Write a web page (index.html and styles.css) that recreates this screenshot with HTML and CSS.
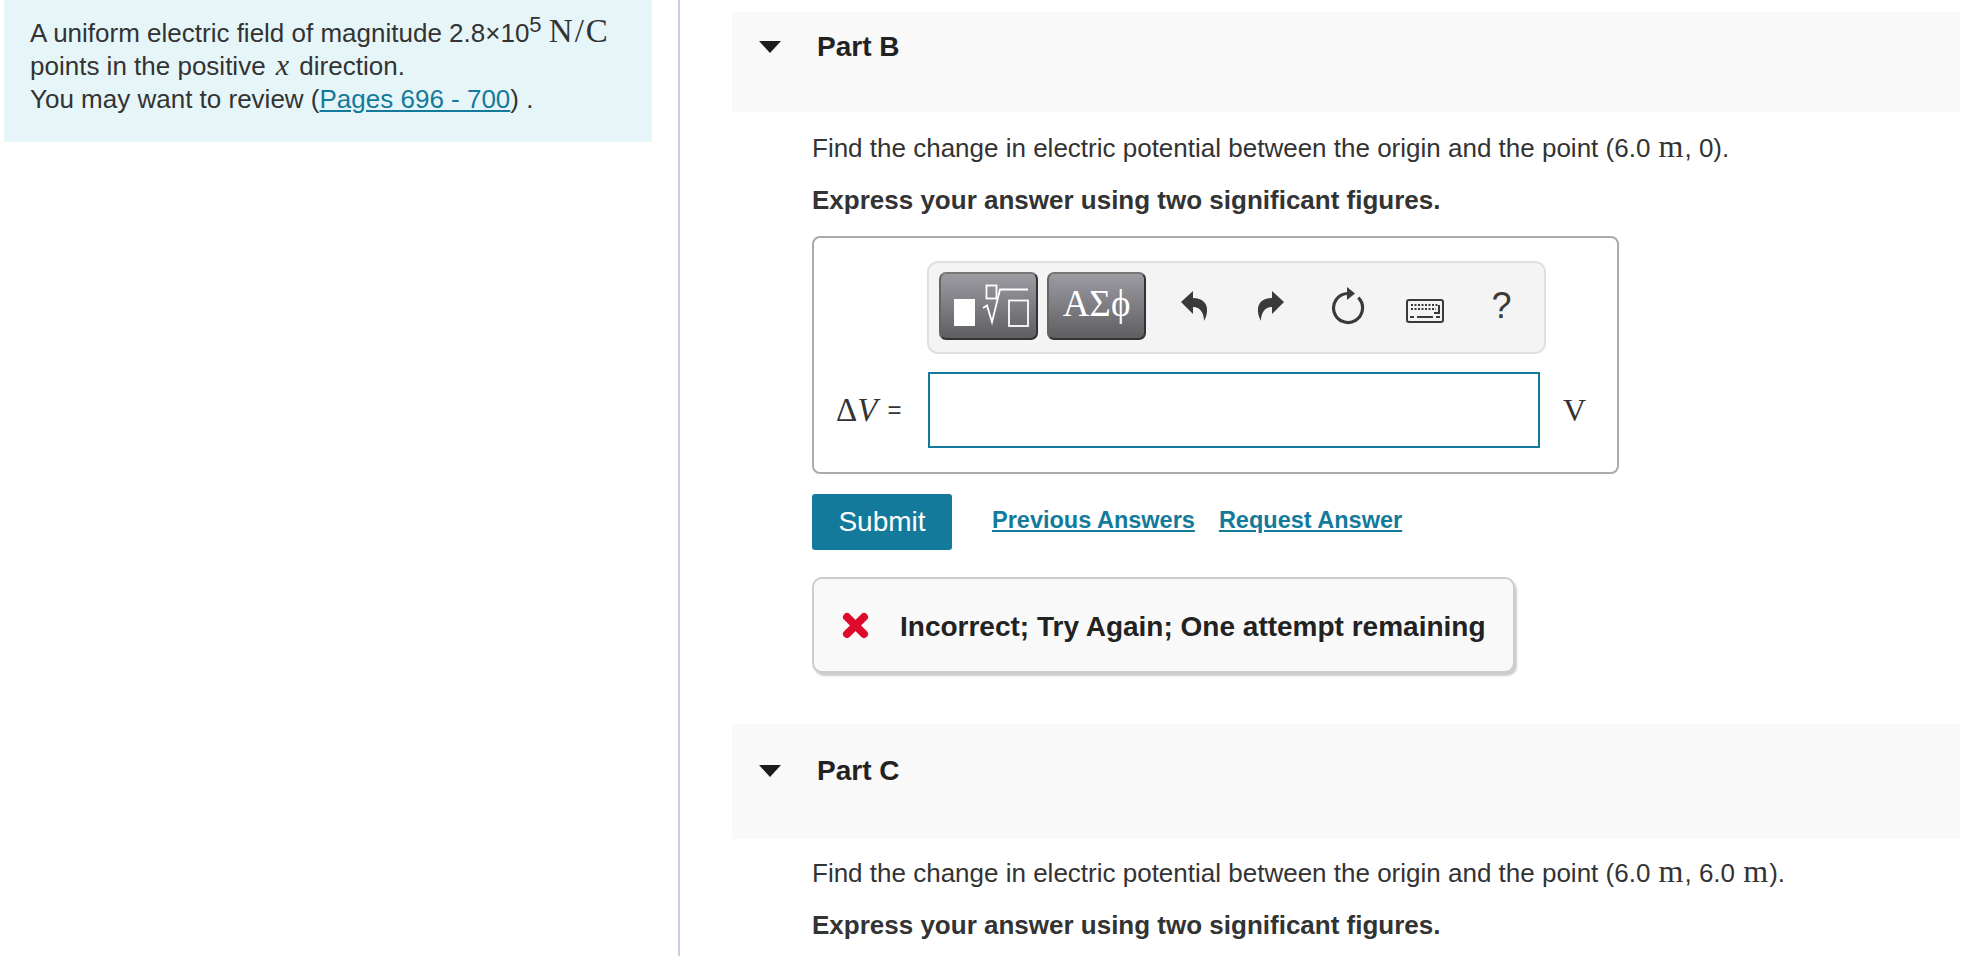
FILE: index.html
```html
<!DOCTYPE html>
<html lang="en">
<head>
    <meta charset="UTF-8">
    <meta name="viewport" content="width=device-width, initial-scale=1.0">
    <title>Electric Potential</title>
    <link rel="stylesheet" href="styles.css">
</head>
<body>
    <div class="page">
        <div class="left-col">
            <div class="intro">
                A uniform electric field of magnitude 2.8×10<sup class="power">5</sup> <span class="math math-unit">N<span class="slash">/</span>C</span><br>
                points in the positive <span class="math math-var">x</span> direction.<br>
                You may want to review (<a href="#">Pages 696 - 700</a>) .
            </div>
        </div>
        <div class="right-col">
            <div class="part-head">
                <span class="caret"></span>
                <span class="part-title">Part B</span>
            </div>
            <div class="part-body">
                <p class="question">Find the change in electric potential between the origin and the point (6.0 <span class="math math-metre">m</span>, 0).</p>
                <p class="hint">Express your answer using two significant figures.</p>

                <div class="answer-box">
                    <div class="toolbar">
                        <button class="tool-btn">
                            <svg class="tool-svg" width="95" height="64" viewBox="2 2 95 64">
                                <rect x="15" y="27" width="21" height="27" fill="#fff"/>
                                <rect x="47.500" y="13.500" width="10" height="13" fill="none" stroke="#fff" stroke-width="1.800"/>
                                <path d="M44 36 L48 33.500 L53 50 L61 17.500 H89" fill="none" stroke="#fff" stroke-width="1.800"/>
                                <rect x="70" y="28.500" width="19" height="25.500" fill="none" stroke="#fff" stroke-width="1.800"/>
                            </svg>
                        </button>
                        <button class="tool-btn tool-greek">ΑΣϕ</button>
                        <span class="tool-icon icon-undo">
                            <svg width="28" height="32" viewBox="0 0 28 32"><path d="M1 12 L13 1 V8 C22 8 28 13 27 22 C26.700 26 25 29 24 31 C24 24 21 17 13 17 V24 Z" fill="#3a3a3a"/></svg>
                        </span>
                        <span class="tool-icon icon-redo">
                            <svg width="28" height="32" viewBox="0 0 28 32"><path d="M27 12 L15 1 V8 C6 8 0 13 1 22 C1.300 26 3 29 4 31 C4 24 7 17 15 17 V24 Z" fill="#3a3a3a"/></svg>
                        </span>
                        <span class="tool-icon icon-reset">
                            <svg width="34" height="38" viewBox="0 0 34 38"><path d="M27.300 10.700 A14.500 14.500 0 1 1 16 6.500" fill="none" stroke="#3a3a3a" stroke-width="3.200"/><path d="M16 0 L24 6.500 L16 13 Z" fill="#3a3a3a"/></svg>
                        </span>
                        <span class="tool-icon icon-keys">
                            <svg width="38" height="24" viewBox="0 0 38 24">
                                <rect x="1" y="1" width="36" height="22" rx="2" fill="none" stroke="#3a3a3a" stroke-width="2"/>
                                <path d="M5 6 H33 M5 10 H30" fill="none" stroke="#3a3a3a" stroke-width="2" stroke-dasharray="2 1.500"/>
                                <path d="M33 6 V14 H28 M11 18 H27 M4 18 H8 M30 18 H34" fill="none" stroke="#3a3a3a" stroke-width="2"/>
                            </svg>
                        </span>
                        <span class="tool-icon tool-help">?</span>
                    </div>
                    <div class="answer-row">
                        <label class="answer-label" for="answer"><span class="math math-delta">Δ<i>V</i></span><span class="equals">=</span></label>
                        <input type="text" id="answer" class="answer-input">
                        <span class="math answer-unit">V</span>
                    </div>
                </div>

                <div class="actions">
                    <button class="submit-btn">Submit</button>
                    <a href="#" class="action-link">Previous Answers</a>
                    <a href="#" class="action-link">Request Answer</a>
                </div>

                <div class="feedback">
                    <svg width="27" height="27" viewBox="0 0 27 27"><path d="M5 5 L22 22 M22 5 L5 22" fill="none" stroke="#dd0a2b" stroke-width="8" stroke-linecap="round"/></svg>
                    <span class="feedback-text">Incorrect; Try Again; One attempt remaining</span>
                </div>
            </div>

            <div class="part-head part-head-c">
                <span class="caret"></span>
                <span class="part-title">Part C</span>
            </div>
            <div class="part-body">
                <p class="question question-c">Find the change in electric potential between the origin and the point (6.0 <span class="math math-metre">m</span>, 6.0 <span class="math math-metre">m</span>).</p>
                <p class="hint">Express your answer using two significant figures.</p>
            </div>
        </div>
    </div>
</body>
</html>
```

FILE: styles.css
```css
html, body {
    margin: 0;
    padding: 0;
    height: 956px;
    overflow: hidden;
    background-color: #fff;
    font-family: "Liberation Sans", Arial, sans-serif;
    font-size: 26px;
    color: #333;
}
a {
    color: #147a9c;
}
.page {
    display: flex;
    height: 956px;
}
.left-col {
    box-sizing: border-box;
    width: 680px;
    flex-shrink: 0;
    padding-left: 4px;
    border-right: 2px solid #c5cfe0;
}
.intro {
    box-sizing: border-box;
    width: 648px;
    height: 142px;
    padding: 17px 26px 0;
    background: #e6f6f8;
    line-height: 33px;
}
.power {
    font-size: 22px;
    line-height: 0;
}
.math {
    font-family: "Liberation Serif", "DejaVu Serif", serif;
    font-size: 30px;
    line-height: 0;
}
.math-unit {
    font-size: 33px;
}
.math-metre {
    font-size: 32px;
    margin: 0 1px;
}
.slash {
    margin: 0 2px;
}
.math-var {
    font-size: 30px;
    font-style: italic;
    margin: 0 3px;
}
.right-col {
    flex: 1;
    padding: 12px 6px 0 52px;
}
.part-head {
    display: flex;
    align-items: flex-start;
    height: 100px;
    padding: 18px 0 0 27px;
    box-sizing: border-box;
    background: #f9f9f9;
}
.part-head-c {
    height: 115px;
    margin-top: 51px;
    padding-top: 30px;
}
.caret {
    width: 0;
    height: 0;
    margin: 11px 36px 0 0;
    border-left: 11px solid transparent;
    border-right: 11px solid transparent;
    border-top: 12px solid #1c1c1c;
}
.part-title {
    font-size: 28px;
    font-weight: bold;
    color: #222;
    line-height: 34px;
}
.part-body {
    padding-left: 80px;
}
.question {
    margin: 20px 0 0;
    line-height: 32px;
}
.question-c {
    margin-top: 18px;
}
.hint {
    margin: 20px 0 0;
    line-height: 32px;
    font-weight: bold;
}
.answer-box {
    box-sizing: border-box;
    width: 807px;
    height: 238px;
    margin-top: 20px;
    padding: 23px 0 0 22px;
    border: 2px solid #aaa;
    border-radius: 8px;
}
.toolbar {
    display: flex;
    align-items: center;
    box-sizing: border-box;
    width: 619px;
    height: 93px;
    margin-left: 91px;
    padding: 0 0 3px 10px;
    background: #f4f4f4;
    border: 2px solid #e0e0e0;
    border-radius: 11px;
}
.tool-btn {
    box-sizing: border-box;
    width: 99px;
    height: 68px;
    margin-right: 9px;
    padding: 0;
    border: 2px solid #333;
    border-top-color: #777;
    border-left-color: #666;
    border-radius: 7px;
    background: linear-gradient(#9b9ba2, #5f5f62);
    color: #fff;
}
.tool-svg {
    display: block;
}
.tool-greek {
    padding-bottom: 6px;
    font-family: "Liberation Serif", "DejaVu Serif", serif;
    font-size: 37px;
}
.tool-icon {
    display: flex;
    justify-content: center;
    align-items: center;
    width: 77px;
    color: #3a3a3a;
}
.icon-keys {
    padding-top: 10px;
}
.tool-help {
    font-size: 36px;
}
.answer-row {
    display: flex;
    align-items: center;
    margin-top: 18px;
}
.answer-label {
    display: flex;
    align-items: center;
    width: 92px;
    white-space: nowrap;
}
.math-delta {
    font-size: 33px;
    line-height: 1;
}
.equals {
    margin-left: 10px;
    font-size: 24px;
}
.answer-input {
    box-sizing: border-box;
    width: 612px;
    height: 76px;
    border: 2px solid #147a9c;
    background: #fff;
}
.answer-unit {
    margin-left: 23px;
    font-size: 32px;
}
.actions {
    display: flex;
    align-items: center;
    margin-top: 20px;
}
.submit-btn {
    width: 140px;
    height: 56px;
    margin-right: 40px;
    border: none;
    border-radius: 3px;
    background: #147a9c;
    color: #fff;
    font-family: "Liberation Sans", Arial, sans-serif;
    font-size: 28px;
}
.action-link {
    margin: 0 24px 0 0;
    font-size: 23.500px;
    font-weight: bold;
    position: relative;
    top: -2px;
}
.feedback {
    display: flex;
    align-items: center;
    gap: 31px;
    box-sizing: border-box;
    width: 703px;
    height: 96px;
    margin-top: 27px;
    padding-left: 28px;
    background: #f9f9f9;
    border: 2px solid #ccc;
    border-radius: 10px;
    box-shadow: 2px 3px 2px #ccc;
    font-size: 28px;
    font-weight: bold;
    color: #222;
}
.feedback-text {
    padding-top: 3px;
}
```
